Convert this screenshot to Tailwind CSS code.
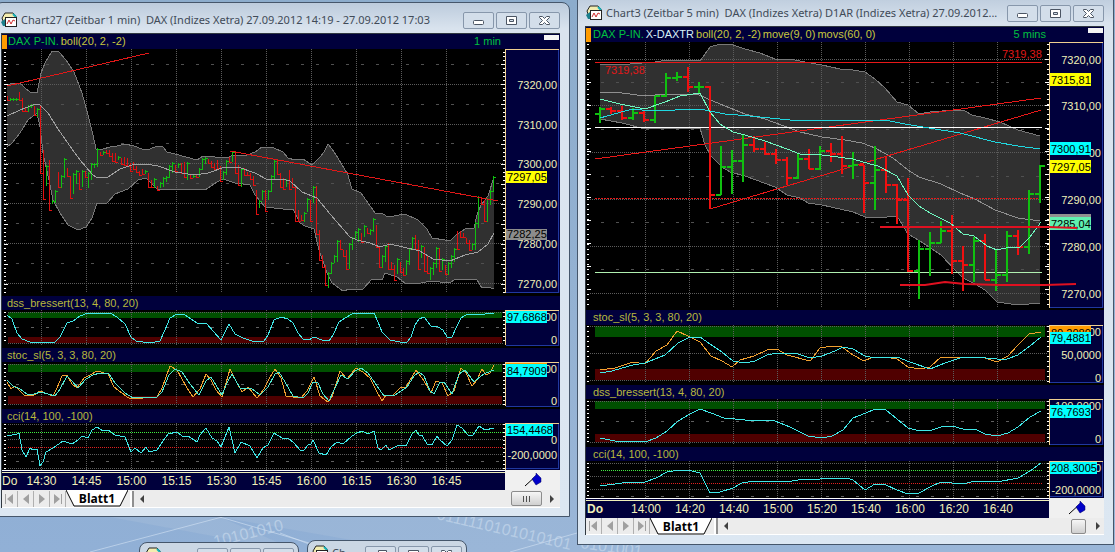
<!DOCTYPE html>
<html lang="de">
<head>
  <meta charset="UTF-8" />
  <meta name="viewport" content="width=device-width, initial-scale=1.0" />
  <title>DAX Charts</title>
  <script src="https://cdn.jsdelivr.net/npm/@tailwindcss/browser@4"></script>
</head>
<body class="relative h-screen overflow-hidden bg-linear-to-b from-[#8caccc] to-[#9ab6d8] font-['Liberation_Sans',sans-serif] text-[11px]">

  <!-- Shared icons -->
  <svg class="hidden">
    <symbol id="app" viewBox="0 0 16 16">
      <path d="M1 6l3-5h8l3 3v8H3z" fill="#f3edb0" stroke="#222" />
      <path d="M0 10l4-3v7H2z" fill="#1b7f8c" />
      <path d="M12 2l3 3" stroke="#18b0b8" stroke-width="2" />
      <rect x="4.500" y="5.500" width="11" height="9" fill="#fff" stroke="#222" />
      <path d="M6 12l2-4 2 4 2-4 2 1" fill="none" stroke="#d03030" />
    </symbol>
    <symbol id="min" viewBox="0 0 29 15"><rect x="9.500" y="7.500" width="10" height="4" rx="1" fill="#fff" stroke="#4b5563" /></symbol>
    <symbol id="max" viewBox="0 0 29 15"><path d="M9.500 3.500h10v8h-10zM12.500 6.500h4v2h-4z" fill="#fff" fill-rule="evenodd" stroke="#4b5563" /></symbol>
    <symbol id="restore" viewBox="0 0 29 15"><path d="M12.500 3.500h8v6h-8zM9.500 6.500h8v6h-8z" fill="#fff" stroke="#4b5563" /></symbol>
    <symbol id="close" viewBox="0 0 29 15"><path d="M9.500 3.500h3l2 2 2-2h3v1l-3 3 3 3v1h-3l-2-2-2 2h-3v-1l3-3-3-3z" fill="#fff" stroke="#4b5563" /></symbol>
    <symbol id="pin" viewBox="0 0 18 14">
      <path d="M1 13L13 2" stroke="#000" />
      <path d="M8 6l4-4V0l5 5v4l-5 3z" fill="#0000c8" stroke="#000060" stroke-width=".5" />
    </symbol>
    <symbol id="first" viewBox="0 0 15 16"><path d="M3 3h1v10H3zM11 3v10L5 8z" fill="#a0a0a0" /></symbol>
    <symbol id="prev" viewBox="0 0 15 16"><path d="M11 3v10L5 8z" fill="#a0a0a0" /></symbol>
    <symbol id="next" viewBox="0 0 15 16"><path d="M5 3v10l6-5z" fill="#a0a0a0" /></symbol>
    <symbol id="last" viewBox="0 0 15 16"><path d="M4 3v10l6-5zM11 3h1v10h-1z" fill="#a0a0a0" /></symbol>
  </svg>

  <!-- Wallpaper -->
  <svg class="absolute bottom-0 left-0 h-[52px] w-full" viewBox="0 500 1115 52" preserveAspectRatio="none">
    <path d="M0 552V517H110L300 552zM220 517L420 552H300z" fill="#7fa3d0" opacity=".3" />
    <path d="M220 517L340 552M90 552L222 517M280 533L330 552M510 552L577 533" stroke="#d4e3f3" opacity=".6" fill="none" />
    <g fill="#d6e4f3" opacity=".5" font-family="Liberation Sans" font-size="16">
      <text x="215" y="547" transform="rotate(-14 215 547)">10101010</text>
      <text x="436" y="519" transform="rotate(13 436 519)">0111110101010101</text>
      <text x="580" y="548" transform="rotate(8 580 548)">0101001</text>
    </g>
  </svg>

  <!-- Window: 1 min -->
  <section class="absolute top-[2px] -left-[6px] flex w-[576px] flex-col rounded-t-lg border border-[#45566b] bg-linear-to-b from-[#bccbdc] via-[#d9e3ee] via-5% to-[#dce7f2] pb-2">
    <header class="flex h-[30px] items-center pt-1 pr-[9px] pl-[6px]">
      <svg class="size-4 shrink-0"><use href="#app" /></svg>
      <h1 class="ml-1 min-w-0 flex-1 truncate font-['Noto_Sans',sans-serif] text-[11px] whitespace-pre text-[#414b58]">Chart27 (Zeitbar 1 min)  DAX (Indizes Xetra) 27.09.2012 14:19 - 27.09.2012 17:03</h1>
      <div class="flex gap-[2px]">
        <button aria-label="Minimieren" class="h-[17px] w-[31px] rounded-xs border border-[#8797ab] bg-[#d3deea]"><svg class="h-[15px] w-[29px]"><use href="#min" /></svg></button>
        <button aria-label="Maximieren" class="h-[17px] w-[31px] rounded-xs border border-[#8797ab] bg-[#d3deea]"><svg class="h-[15px] w-[29px]"><use href="#max" /></svg></button>
        <button aria-label="Schließen" class="h-[17px] w-[31px] rounded-xs border border-[#8797ab] bg-[#d3deea]"><svg class="h-[15px] w-[29px]"><use href="#close" /></svg></button>
      </div>
    </header>
    <div class="mr-[9px] ml-[6px] flex flex-col border-t border-l border-[#303840] bg-black">
      <div class="flex h-[15px] items-center bg-[#00003c] text-[#c8c83c]">
        <span class="h-[14px] w-[5px] bg-[#ff9c00]"></span>
        <span class="ml-px text-[#00c040]">DAX P-IN.</span>
        <span class="ml-[2px] flex-1">boll(20, 2, -2)</span>
        <span class="mr-[43px] text-[#00c040]">1 min</span>
        <span class="mr-px mb-2 h-[5px] w-[15px] bg-[#f4f4f4]"></span>
      </div>
      <svg class="h-[247px] w-full" viewBox="2 49 558 247" shape-rendering="crispEdges" fill="none">
        <path fill="#303030" d="M7 85L13 83 20 83 25 88 30 92 37 93 41 73 45 63 52 51 59 52 66 60 74 72 82 93 88 115 93 135 96 149 103 149 110 147 117 146 125 144 134 146 142 149 150 149 157 146 163 147 167 152 175 154 197 160 203 156 227 158 233 155 247 155 255 152 262 147 274 148 283 152 288 158 295 160 303 159 312 165 320 157 324 152 328 144 332 149 338 158 348 175 352 189 361 193 373 210 375 213 383 214 388 217 405 214 418 220 427 229 432 238 445 240 451 240 457 234 462 231 467 228 474 228 477 215 481 205 488 196 494 177V289L488 287 482 288 477 280 455 279 450 283 430 281 417 284 405 283 397 277 385 273 382 280 372 279 363 289 350 289 343 291 332 283 327 273 319 250 314 229 305 226 300 223 293 209 283 209 265 207 255 195 250 185 235 183 223 179 217 182 205 190 180 189 157 189 146 178 138 180 128 189 115 194 107 203 97 203 92 218 86 227 78 230 68 225 60 213 53 200 49 180 43 153 40 127 37 113 28 120 20 133 12 143 7 147z" />
        <path stroke="#5c5c5c" stroke-dasharray="1 1" d="M41.500 49V293M86.500 49V293M131.500 49V293M176.500 49V293M221.500 49V293M266.500 49V293M311.500 49V293M356.500 49V293M401.500 49V293M446.500 49V293M4 84.500H503M4 124.500H503M4 163.500H503M4 203.500H503M4 243.500H503M4 283.500H503" />
        <path stroke="#505050" stroke-dasharray="3 12" d="M16 64.500H500M16 104.500H500M16 143.500H500M16 183.500H500M16 223.500H500M16 263.500H500" />
        <path stroke="#787878" d="M7 85L13 83 20 83 25 88 30 92 37 93 41 73 45 63 52 51 59 52 66 60 74 72 82 93 88 115 93 135 96 149 103 149 110 147 117 146 125 144 134 146 142 149 150 149 157 146 163 147 167 152 175 154 197 160 203 156 227 158 233 155 247 155 255 152 262 147 274 148 283 152 288 158 295 160 303 159 312 165 320 157 324 152 328 144 332 149 338 158 348 175 352 189 361 193 373 210 375 213 383 214 388 217 405 214 418 220 427 229 432 238 445 240 451 240 457 234 462 231 467 228 474 228 477 215 481 205 488 196 494 177M494 289L488 287 482 288 477 280 455 279 450 283 430 281 417 284 405 283 397 277 385 273 382 280 372 279 363 289 350 289 343 291 332 283 327 273 319 250 314 229 305 226 300 223 293 209 283 209 265 207 255 195 250 185 235 183 223 179 217 182 205 190 180 189 157 189 146 178 138 180 128 189 115 194 107 203 97 203 92 218 86 227 78 230 68 225 60 213 53 200 49 180 43 153 40 127 37 113 28 120 20 133 12 143 7 147" />
        <g id="bars1"></g>
        <path stroke="#a0a0a0" d="M7 116L20 110 33 105 39 104 48 113 58 129 72 149 80 160 92 174 97 178 108 177 120 169 132 165 145 164 158 166 175 172 195 175 208 173 225 167 238 167 255 173 268 180 282 179 290 181 302 192 317 198 330 214 350 237 357 240 370 243 380 247 390 244 403 247 420 251 433 259 450 261 465 255 478 252 488 244 494 233" />
        <path stroke="#e01818" d="M7 86L149 53M230 151L498 201" />
        <path stroke="#fff" stroke-width="2" stroke-dasharray="1 3" d="M5 52V295M504 52V295" />
        <path stroke="#fff" stroke-width="4" stroke-dasharray="1 19" d="M6 64V295M503 64V295" />
        <rect x="506" y="49" width="54" height="244" fill="#00003c" />
        <path stroke="#f0d090" d="M505.500 293V49.500H559" /><path stroke="#2038a0" d="M506 292.500H558.500V50" />
        <rect x="506" y="171" width="41" height="12" fill="#ff0" /><rect x="506" y="229" width="41" height="11" fill="#8c8c8c" />
        <text x="507" y="181" fill="#000">7297,05</text><text x="507" y="238" fill="#000">7282,25</text>
        <g fill="#f0f0b8" text-anchor="end">
          <text x="557" y="89">7320,00</text><text x="557" y="129">7310,00</text><text x="557" y="168">7300,00</text>
          <text x="557" y="208">7290,00</text><text x="557" y="248">7280,00</text><text x="557" y="288">7270,00</text>
        </g>
      </svg>

      <div class="flex h-[14px] items-center bg-[#00003c] pl-[5px] text-[#b8b83c]">dss_bressert(13, 4, 80, 20)</div>
      <svg class="h-[38px] w-full" viewBox="2 310 558 38" shape-rendering="crispEdges" fill="none">
        <path fill="#005000" d="M8 312H502V318H8z" /><path fill="#500000" d="M8 337H502V343H8z" />
        <path stroke="#5c5c5c" stroke-dasharray="1 1" d="M41.500 310V346M86.500 310V346M131.500 310V346M176.500 310V346M221.500 310V346M266.500 310V346M311.500 310V346M356.500 310V346M401.500 310V346M446.500 310V346M8 312.500H503M8 343.500H503" />
        <path stroke="#606060" stroke-dasharray="3 12" d="M16 327.500H500" />
        <path stroke="#40e8e8" d="M7 315L12 319 17 333 22 339 30 342 45 343 55 342 60 337 67 323 73 321 80 316 88 313 110 313 117 317 125 324 131 337 136 341 150 343 160 341 165 330 170 318 177 314 185 315 197 323 207 324 213 331 221 340 229 324 235 334 243 338 255 342 264 341 268 335 274 320 281 317 288 319 293 323 298 333 303 339 309 340 314 337 322 340 329 341 333 335 339 322 345 318 352 314 361 313 374 313 378 322 382 332 390 340 400 342 407 342 411 337 415 325 419 319 424 317 431 326 438 327 443 330 447 337 452 337 456 328 461 318 466 315 475 314 485 314 494 313" />
        <path stroke="#fff" stroke-width="2" stroke-dasharray="1 3" d="M5 312V344M504 312V344" />
        <rect x="506" y="310" width="54" height="36" fill="#00003c" />
        <path stroke="#f0d090" d="M505.500 345V310.500H559" /><path stroke="#2038a0" d="M506 345.500H558.500V311" />
        <text x="557" y="321" fill="#f0f0b8" text-anchor="end">00</text><text x="557" y="344" fill="#f0f0b8" text-anchor="end">0</text>
        <rect x="506" y="311" width="41" height="12" fill="#0ff" /><text x="507" y="321" fill="#000">97,6868</text>
      </svg>

      <div class="flex h-[14px] items-center bg-[#00003c] pl-[5px] text-[#b8b83c]">stoc_sl(5, 3, 3, 80, 20)</div>
      <svg class="h-[47px] w-full" viewBox="2 362 558 47" shape-rendering="crispEdges" fill="none">
        <path fill="#005000" d="M8 364H502V372H8z" /><path fill="#500000" d="M8 396H502V404H8z" />
        <path stroke="#5c5c5c" stroke-dasharray="1 1" d="M41.500 362V407M86.500 362V407M131.500 362V407M176.500 362V407M221.500 362V407M266.500 362V407M311.500 362V407M356.500 362V407M401.500 362V407M446.500 362V407M8 364.500H503M8 404.500H503" />
        <path stroke="#606060" stroke-dasharray="3 12" d="M16 384.500H500" />
        <path stroke="#f0a030" d="M7 382L11 389 15 386 25 396 34 395 40 391 53 396 57 388 62 376 67 375 72 384 77 388 84 378 90 375 97 371 108 374 114 387 122 393 130 399 157 397 162 388 170 366 177 370 187 388 193 397 200 389 206 374 211 380 216 390 222 397 230 369 236 381 242 392 248 387 257 398 264 389 269 379 275 369 281 378 286 396 301 398 307 391 314 377 320 396 328 402 332 397 340 371 347 379 356 368 363 372 370 378 376 390 382 401 386 395 393 395 400 388 406 387 416 370 424 381 431 393 436 381 442 383 448 396 454 391 461 368 466 373 472 386 477 380 482 369 486 375 490 373 494 365" />
        <path stroke="#50e8d0" d="M7 380L13 386 20 389 27 394 34 394 41 392 55 396 60 389 67 376 72 381 78 388 86 379 93 375 100 373 109 374 115 383 125 393 133 398 157 397 162 392 169 375 175 369 182 372 190 384 199 395 206 381 211 377 222 395 227 383 232 374 240 388 251 388 260 395 268 387 275 374 279 372 285 382 293 396 303 398 308 393 313 382 318 383 323 394 329 401 334 390 341 375 348 379 355 371 361 368 368 373 375 383 384 396 395 395 407 387 414 376 419 372 424 376 430 391 434 394 440 382 444 382 452 394 459 374 465 370 474 382 481 376 486 373 494 370" />
        <path stroke="#fff" stroke-width="2" stroke-dasharray="1 3" d="M5 364V406M504 364V406" />
        <rect x="506" y="362" width="54" height="45" fill="#00003c" />
        <path stroke="#f0d090" d="M505.500 406V362.500H559" /><path stroke="#2038a0" d="M506 406.500H558.500V363" />
        <path stroke="#ff9c00" d="M506 363.500H547" />
        <text x="557" y="373" fill="#f0f0b8" text-anchor="end">00</text><text x="557" y="405" fill="#f0f0b8" text-anchor="end">0</text>
        <rect x="506" y="364" width="41" height="13" fill="#0ff" /><text x="507" y="375" fill="#000">84,7909</text>
      </svg>

      <div class="flex h-[14px] items-center bg-[#00003c] pl-[5px] text-[#b8b83c]">cci(14, 100, -100)</div>
      <svg class="h-[47px] w-full" viewBox="2 423 558 47" shape-rendering="crispEdges" fill="none">
        <path stroke="#5c5c5c" stroke-dasharray="1 1" d="M41.500 423V470M86.500 423V470M131.500 423V470M176.500 423V470M221.500 423V470M266.500 423V470M311.500 423V470M356.500 423V470M401.500 423V470M446.500 423V470M8 424.500H503M8 439.500H503M8 454.500H503M8 468.500H503" />
        <path stroke="#606060" stroke-dasharray="3 12" d="M16 461.500H500" />
        <path stroke="#40f040" stroke-dasharray="1 1" d="M8 432.500H503" /><path stroke="#e02020" stroke-dasharray="1 1" d="M8 447.500H503" />
        <path stroke="#40e8e8" d="M7 436L17 434 19 433 22 450 26 457 30 448 33 450 37 449 40 466 43 462 46 452 53 448 63 441 72 444 78 440 82 436 88 438 92 430 97 427 103 431 108 430 115 435 125 437 131 452 135 448 141 453 146 447 149 452 157 450 163 441 168 434 177 432 182 436 188 436 197 442 200 435 206 428 212 438 217 441 221 447 229 427 235 453 241 442 250 446 257 458 263 448 268 445 274 433 282 438 288 438 294 443 300 450 304 450 308 445 311 444 313 440 319 453 326 455 331 447 337 442 343 444 352 436 357 433 362 431 368 434 374 431 378 448 381 450 386 445 389 450 399 445 406 446 412 434 416 430 419 435 422 435 427 444 432 445 437 436 440 440 447 446 452 440 457 425 462 428 468 435 473 435 479 426 485 430 494 428" />
        <path stroke="#fff" stroke-width="2" stroke-dasharray="1 3" d="M5 424V470M504 424V470" />
        <rect x="506" y="423" width="54" height="47" fill="#00003c" />
        <path stroke="#f0d090" d="M505.500 470V423.500H559" /><path stroke="#2038a0" d="M506 468.500H558.500V424" />
        <text x="557" y="444" fill="#f0f0b8" text-anchor="end">0</text><text x="557" y="459" fill="#f0f0b8" text-anchor="end">-200,0000</text>
        <rect x="506" y="424" width="47" height="12" fill="#0ff" /><text x="507" y="434" fill="#000">154,4468</text>
      </svg>

      <div class="flex h-5 bg-[#f0f0f0]">
        <div class="flex flex-1 border-t border-white bg-[#00003c] text-[12px] leading-[17px] text-[#f0f0b8]">
          <div class="mt-px flex flex-1 border-t border-[#f0f0b8]">
            <span class="w-[17px]">Do</span>
            <span class="w-[45px] text-center">14:30</span><span class="w-[45px] text-center">14:45</span>
            <span class="w-[45px] text-center">15:00</span><span class="w-[45px] text-center">15:15</span>
            <span class="w-[45px] text-center">15:30</span><span class="w-[45px] text-center">15:45</span>
            <span class="w-[45px] text-center">16:00</span><span class="w-[45px] text-center">16:15</span>
            <span class="w-[45px] text-center">16:30</span><span class="w-[45px] text-center">16:45</span>
          </div>
        </div>
        <div class="flex w-[55px] items-center justify-center"><svg class="h-[14px] w-[18px]"><use href="#pin" /></svg></div>
      </div>
      <div class="flex h-[18px] items-center border-b border-white bg-[#ececec]">
        <button aria-label="Erstes Blatt" class="h-4 w-4 border-r border-[#b0b0b0]"><svg class="h-4 w-[15px]"><use href="#first" /></svg></button>
        <button aria-label="Voriges Blatt" class="h-4 w-4 border-r border-[#b0b0b0]"><svg class="h-4 w-[15px]"><use href="#prev" /></svg></button>
        <button aria-label="Nächstes Blatt" class="h-4 w-4 border-r border-[#b0b0b0]"><svg class="h-4 w-[15px]"><use href="#next" /></svg></button>
        <button aria-label="Letztes Blatt" class="h-4 w-4 border-r border-[#b0b0b0]"><svg class="h-4 w-[15px]"><use href="#last" /></svg></button>
        <button class="relative h-[17px] w-[62px] font-['Open_Sans',sans-serif] text-[12px] leading-[15px] font-bold text-black">
          <svg class="absolute inset-0 h-[17px] w-[62px]" viewBox="0 0 62 17"><path d="M0 0l8 16h46l8-16" fill="#fff" stroke="#000" /></svg>
          <span class="relative">Blatt1</span>
        </button>
        <span class="ml-[2px] h-4 w-1 border-r-2 border-[#909090] bg-white"></span>
        <svg class="ml-[6px] h-2 w-1" viewBox="0 0 4 8"><path d="M4 0v8L0 4z" fill="#404040" /></svg>
        <span class="flex-1"></span>
        <button aria-label="Bildlauf" class="flex h-[15px] w-[31px] items-center justify-center gap-[2px] rounded-xs border border-[#8c8c8c] bg-linear-to-b from-[#f6f6f6] to-[#d0d0d0]">
          <i class="h-[6px] w-px bg-[#505050]"></i><i class="h-[6px] w-px bg-[#505050]"></i><i class="h-[6px] w-px bg-[#505050]"></i>
        </button>
        <svg class="mr-[6px] ml-2 h-2 w-1" viewBox="0 0 4 8"><path d="M0 0v8l4-4z" fill="#404040" /></svg>
      </div>
    </div>
  </section>

  <!-- Window: 5 min -->
  <section class="absolute -top-[5px] left-[577px] flex w-[537px] flex-col border border-[#45566b] bg-linear-to-b from-[#bccbdc] via-[#d9e3ee] via-5% to-[#dce7f2] pb-[9px]">
    <header class="flex h-[30px] items-center pt-1 pr-[9px] pl-2">
      <svg class="size-4 shrink-0"><use href="#app" /></svg>
      <h1 class="ml-1 min-w-0 flex-1 truncate font-['Noto_Sans',sans-serif] text-[11px] whitespace-pre text-[#414b58]">Chart3 (Zeitbar 5 min)  DAX (Indizes Xetra) D1AR (Indizes Xetra) 27.09.2012...</h1>
      <div class="flex gap-[2px]">
        <button aria-label="Minimieren" class="h-[17px] w-[31px] rounded-xs border border-[#8797ab] bg-[#d3deea]"><svg class="h-[15px] w-[29px]"><use href="#min" /></svg></button>
        <button aria-label="Maximieren" class="h-[17px] w-[31px] rounded-xs border border-[#8797ab] bg-[#d3deea]"><svg class="h-[15px] w-[29px]"><use href="#max" /></svg></button>
        <button aria-label="Schließen" class="h-[17px] w-[31px] rounded-xs border border-[#8797ab] bg-[#d3deea]"><svg class="h-[15px] w-[29px]"><use href="#close" /></svg></button>
      </div>
    </header>
    <div class="mr-[9px] ml-[7px] flex flex-col border-t border-l border-[#303840] bg-black">
      <div class="flex h-[15px] items-center bg-[#00003c] text-[#c8c83c]">
        <span class="h-[14px] w-[5px] bg-[#ff9c00]"></span>
        <span class="ml-[2px] text-[#00c040]">DAX P-IN.</span>
        <span class="ml-[2px] text-[#d8f0f8]">X-DAXTR</span>
        <span class="ml-[2px]">boll(20, 2, -2)</span>
        <span class="ml-[2px]">move(9, 0)</span>
        <span class="ml-[2px] flex-1">movs(60, 0)</span>
        <span class="mr-[42px] text-[#00c040]">5 mins</span>
        <span class="mr-px mb-2 h-[5px] w-[15px] bg-[#f4f4f4]"></span>
      </div>
      <svg class="h-[268px] w-full" viewBox="586 42 518 268" shape-rendering="crispEdges" fill="none">
        <path fill="#303030" d="M600 65L630 64 655 62 668 60 700 61 710 47 720 44 733 45 745 49 760 53 775 59 790 59 805 62 822 65 840 69 853 70 865 72 875 79 885 88 897 102 908 105 919 114 930 112 955 110 965 111 972 115 985 118 1000 122 1018 130 1040 136V303L1018 305 997 302 985 290 975 284 963 278 955 270 941 255 920 241 908 234 897 216 878 218 865 217 853 212 822 205 808 203 800 198 787 195 775 187 745 176 730 172 722 167 711 156 705 145 700 128 660 128 645 129 622 123 600 119z" />
        <path stroke="#5c5c5c" stroke-dasharray="1 1" d="M645.500 42V308M689.500 42V308M733.500 42V308M777.500 42V308M821.500 42V308M865.500 42V308M909.500 42V308M953.500 42V308M997.500 42V308M590 59.500H1047M590 105.500H1047M590 152.500H1047M590 199.500H1047M590 246.500H1047M590 293.500H1047" />
        <path stroke="#505050" stroke-dasharray="3 12" d="M601 82.500H1045M601 129.500H1045M601 176.500H1045M601 222.500H1045M601 269.500H1045" />
        <path stroke="#787878" d="M600 65L630 64 655 62 668 60 700 61 710 47 720 44 733 45 745 49 760 53 775 59 790 59 805 62 822 65 840 69 853 70 865 72 875 79 885 88 897 102 908 105 919 114 930 112 955 110 965 111 972 115 985 118 1000 122 1018 130 1040 136M1040 303L1018 305 997 302 985 290 975 284 963 278 955 270 941 255 920 241 908 234 897 216 878 218 865 217 853 212 822 205 808 203 800 198 787 195 775 187 745 176 730 172 722 167 711 156 705 145 700 128 660 128 645 129 622 123 600 119" />
        <path stroke="#909090" d="M600 92L622 93 645 96 666 94 699 95 720 104 745 114 765 119 800 132 822 137 845 140 862 143 875 148 893 158 908 170 919 177 941 184 960 193 975 199 995 210 1018 218 1040 221" />
        <path stroke="#e81818" d="M595 62.500H1042M595 159L1041 98M710 209L1041 110" />
        <path stroke="#e81818" stroke-dasharray="2 1" d="M595 198.500H1042" />
        <path stroke="#fff" d="M595 127.500H1042" /><path stroke="#b0f0b0" d="M595 272.500H1042" />
        <g id="bars5"></g>
        <path stroke="#20d8e0" d="M600 118L625 111 633 109 650 111 675 110 700 109 725 114 750 116 790 120 822 120 885 120 905 124 935 129 960 133 995 142 1018 146 1040 149" />
        <path stroke="#70f8c0" d="M600 99L620 104 645 109 665 102 680 96 700 93 710 112 720 124 733 132 745 135 765 141 787 149 800 154 822 155 853 159 870 164 878 166 897 176 908 195 919 206 930 213 950 223 963 234 974 236 987 246 997 250 1010 247 1020 247 1030 237 1041 222" />
        <g fill="#e01818"><text x="605" y="74">7319,38</text><text x="1002" y="58">7319,38</text></g>
        <path stroke="#fff" stroke-width="2" stroke-dasharray="1 4" d="M588 44V309M1048 44V309" />
        <path stroke="#fff" stroke-width="4" stroke-dasharray="1 22" d="M589 59V309M1047 59V309" />
        <rect x="1050" y="42" width="54" height="266" fill="#00003c" />
        <path stroke="#f0d090" d="M1049.500 308V42.500H1103" /><path stroke="#2038a0" d="M1050 307.500H1102.500V43" />
        <g fill="#f0f0b8" text-anchor="end">
          <text x="1101" y="64">7320,00</text><text x="1101" y="110">7310,00</text><text x="1101" y="157">00</text>
          <text x="1101" y="204">7290,00</text><text x="1101" y="251">7280,00</text><text x="1101" y="298">7270,00</text>
        </g>
        <path fill="#ff0" d="M1050 73h41v13h-41zM1050 160h41v13h-41z" /><path fill="#0ff" d="M1050 142h41v13h-41z" />
        <path fill="#909090" d="M1050 214h41v3h-41z" /><path fill="#60f0b0" d="M1050 217h41v13h-41z" />
        <g fill="#000"><text x="1051" y="84">7315,81</text><text x="1051" y="153">7300,91</text><text x="1051" y="171">7297,05</text><text x="1051" y="228">7285,04</text></g>
        <g stroke="#e01020" stroke-width="2" shape-rendering="auto"><path d="M880 227H1048L1077 228" /><path d="M900 285L925 285 945 282 965 284 1000 285 1045 285 1076 284" /></g>
      </svg>

      <div class="flex h-[15px] items-center bg-[#00003c] pl-[7px] text-[#b8b83c]">stoc_sl(5, 3, 3, 80, 20)</div>
      <svg class="h-[60px] w-full" viewBox="586 325 518 60" shape-rendering="crispEdges" fill="none">
        <path fill="#005000" d="M595 326H1045V337H595z" /><path fill="#500000" d="M595 369H1045V380H595z" />
        <path stroke="#5c5c5c" stroke-dasharray="1 1" d="M645.500 325V383M689.500 325V383M733.500 325V383M777.500 325V383M821.500 325V383M865.500 325V383M909.500 325V383M953.500 325V383M997.500 325V383M590 326.500H1047M590 353.500H1047M590 380.500H1047" />
        <path stroke="#f0a030" d="M600 370L615 368 633 362 645 364 656 351 667 345 677 331 688 336 700 342 711 356 722 361 732 367 740 360 754 356 767 350 777 349 787 355 810 361 820 348 832 346 842 347 853 355 864 361 873 357 886 357 897 359 908 367 920 369 930 367 941 357 965 357 985 358 997 362 1008 356 1018 345 1029 334 1041 332" />
        <path stroke="#40e8e8" d="M600 373L612 371 622 368 633 365 645 363 665 355 678 343 690 337 700 337 710 344 722 352 733 361 745 363 755 361 767 355 778 353 795 353 810 358 822 356 835 351 843 347 853 349 865 356 875 358 897 357 910 362 930 369 945 363 960 358 975 357 997 359 1007 359 1018 355 1030 346 1041 337" />
        <path stroke="#fff" stroke-width="2" stroke-dasharray="1 4" d="M588 326V383M1048 326V383" />
        <rect x="1050" y="325" width="54" height="58" fill="#00003c" />
        <path stroke="#f0d090" d="M1049.500 383V325.500H1103" /><path stroke="#2038a0" d="M1050 382.500H1102.500V326" />
        <g fill="#f0f0b8" text-anchor="end"><text x="1101" y="336">00</text><text x="1101" y="359">50,0000</text><text x="1101" y="382">0</text></g>
        <rect x="1050" y="326" width="41" height="8" fill="#ff9c00" /><text x="1051" y="337" fill="#000">80,2089</text>
        <rect x="1050" y="332" width="41" height="12" fill="#0ff" /><text x="1051" y="342" fill="#000">79,4881</text>
      </svg>

      <div class="flex h-[14px] items-center bg-[#00003c] pl-[7px] text-[#b8b83c]">dss_bressert(13, 4, 80, 20)</div>
      <svg class="h-[48px] w-full" viewBox="586 399 518 48" shape-rendering="crispEdges" fill="none">
        <path fill="#005000" d="M595 401H1045V409H595z" /><path fill="#500000" d="M595 434H1045V442H595z" />
        <path stroke="#5c5c5c" stroke-dasharray="1 1" d="M645.500 399V445M689.500 399V445M733.500 399V445M777.500 399V445M821.500 399V445M865.500 399V445M909.500 399V445M953.500 399V445M997.500 399V445M590 401.500H1047M590 442.500H1047" />
        <path stroke="#606060" stroke-dasharray="3 12" d="M601 421.500H1045" />
        <path stroke="#40e8e8" d="M600 438L615 441 635 441 645 442 656 438 667 431 678 421 690 414 700 409 711 413 724 418 745 420 775 421 790 427 808 436 822 438 832 436 843 430 853 418 866 413 875 409 886 410 897 419 908 428 920 431 932 430 941 427 952 426 963 429 975 429 985 434 997 436 1008 433 1018 427 1030 417 1041 411" />
        <path stroke="#fff" stroke-width="2" stroke-dasharray="1 3" d="M588 401V444M1048 401V444" />
        <rect x="1050" y="399" width="54" height="46" fill="#00003c" />
        <path stroke="#f0d090" d="M1049.500 445V399.500H1103" /><path stroke="#2038a0" d="M1050 444.500H1102.500V400" />
        <g fill="#f0f0b8" text-anchor="end"><text x="1101" y="410">100,0000</text><text x="1101" y="443">0</text></g>
        <rect x="1050" y="405" width="41" height="13" fill="#0ff" /><text x="1051" y="416" fill="#000">76,7693</text>
      </svg>

      <div class="flex h-[14px] items-center bg-[#00003c] pl-[7px] text-[#b8b83c]">cci(14, 100, -100)</div>
      <svg class="h-[37px] w-full" viewBox="586 461 518 37" shape-rendering="crispEdges" fill="none">
        <path stroke="#5c5c5c" stroke-dasharray="1 1" d="M645.500 461V498M689.500 461V498M733.500 461V498M777.500 461V498M821.500 461V498M865.500 461V498M909.500 461V498M953.500 461V498M997.500 461V498M590 463.500H1047M590 476.500H1047M590 489.500H1047" />
        <path stroke="#606060" stroke-dasharray="3 12" d="M601 496.500H1045" />
        <path stroke="#40f040" stroke-dasharray="1 1" d="M601 470.500H1042" /><path stroke="#e02020" stroke-dasharray="1 1" d="M601 483.500H1042" />
        <path stroke="#40e8e8" d="M600 486L615 484 630 482 645 482 656 478 667 472 680 470 692 471 700 473 710 493 720 492 733 488 742 483 755 481 775 481 787 482 798 480 820 479 835 478 847 478 853 480 865 490 875 484 886 485 897 490 908 494 919 493 930 487 941 482 963 484 975 481 997 482 1018 478 1030 471 1041 463" />
        <path stroke="#fff" stroke-width="2" stroke-dasharray="1 3" d="M588 463V498M1048 463V498" />
        <rect x="1050" y="461" width="54" height="37" fill="#00003c" />
        <path stroke="#f0d090" d="M1049.500 498V461.500H1103" /><path stroke="#2038a0" d="M1050 496.500H1102.500V462" />
        <g fill="#f0f0b8" text-anchor="end"><text x="1101" y="472">0</text><text x="1101" y="494">-200,0000</text></g>
        <rect x="1050" y="462" width="47" height="12" fill="#0ff" /><text x="1051" y="472" fill="#000">208,3005</text>
      </svg>

      <div class="flex h-5 bg-[#f0f0f0]">
        <div class="flex flex-1 border-t border-white bg-[#00003c] text-[12px] leading-[17px] text-[#f0f0b8]">
          <div class="mt-px flex flex-1 border-t border-[#f0f0b8]">
            <span class="w-[38px] pl-px font-bold">Do</span>
            <span class="w-[44px] text-center">14:00</span><span class="w-[44px] text-center">14:20</span>
            <span class="w-[44px] text-center">14:40</span><span class="w-[44px] text-center">15:00</span>
            <span class="w-[44px] text-center">15:20</span><span class="w-[44px] text-center">15:40</span>
            <span class="w-[44px] text-center">16:00</span><span class="w-[44px] text-center">16:20</span>
            <span class="w-[44px] text-center">16:40</span>
          </div>
        </div>
        <div class="flex w-[55px] items-center justify-center"><svg class="h-[14px] w-[18px]"><use href="#pin" /></svg></div>
      </div>
      <div class="flex h-[17px] items-center border-b border-white bg-[#ececec]">
        <button aria-label="Erstes Blatt" class="h-4 w-4 border-r border-[#b0b0b0]"><svg class="h-4 w-[15px]"><use href="#first" /></svg></button>
        <button aria-label="Voriges Blatt" class="h-4 w-4 border-r border-[#b0b0b0]"><svg class="h-4 w-[15px]"><use href="#prev" /></svg></button>
        <button aria-label="Nächstes Blatt" class="h-4 w-4 border-r border-[#b0b0b0]"><svg class="h-4 w-[15px]"><use href="#next" /></svg></button>
        <button aria-label="Letztes Blatt" class="h-4 w-4 border-r border-[#b0b0b0]"><svg class="h-4 w-[15px]"><use href="#last" /></svg></button>
        <button class="relative h-[17px] w-[62px] font-['Open_Sans',sans-serif] text-[12px] leading-[15px] font-bold text-black">
          <svg class="absolute inset-0 h-[17px] w-[62px]" viewBox="0 0 62 17"><path d="M0 0l8 16h46l8-16" fill="#fff" stroke="#000" /></svg>
          <span class="relative">Blatt1</span>
        </button>
        <span class="ml-[2px] h-4 w-1 border-r-2 border-[#909090] bg-white"></span>
        <svg class="ml-[6px] h-2 w-1" viewBox="0 0 4 8"><path d="M4 0v8L0 4z" fill="#404040" /></svg>
        <span class="flex-1"></span>
        <button aria-label="Bildlauf" class="h-[15px] w-[15px] rounded-xs border border-[#8c8c8c] bg-linear-to-b from-[#f6f6f6] to-[#d0d0d0]"></button>
        <svg class="mr-1 ml-[10px] h-2 w-1" viewBox="0 0 4 8"><path d="M0 0v8l4-4z" fill="#404040" /></svg>
      </div>
    </div>
  </section>

  <!-- Minimized windows -->
  <section class="absolute top-[542px] left-[139px] flex h-7 w-[160px] items-start rounded-t-lg border border-[#45566b] bg-[#cbd7e4] pt-1 pr-1 pl-[5px]">
    <svg class="size-4 shrink-0"><use href="#app" /></svg>
    <span class="flex-1"></span>
    <div class="flex gap-[2px] pt-px">
      <button aria-label="Wiederherstellen" class="h-[17px] w-[31px] rounded-xs border border-[#8797ab] bg-[#d3deea]"><svg class="h-[15px] w-[29px]"><use href="#restore" /></svg></button>
      <button aria-label="Maximieren" class="h-[17px] w-[31px] rounded-xs border border-[#8797ab] bg-[#d3deea]"><svg class="h-[15px] w-[29px]"><use href="#max" /></svg></button>
      <button aria-label="Schließen" class="h-[17px] w-[31px] rounded-xs border border-[#8797ab] bg-[#d3deea]"><svg class="h-[15px] w-[29px]"><use href="#close" /></svg></button>
    </div>
  </section>
  <section class="absolute top-[540px] left-[307px] flex h-7 w-[160px] items-start rounded-t-lg border border-[#45566b] bg-[#cbd7e4] pt-1 pr-1 pl-1">
    <svg class="size-4 shrink-0"><use href="#app" /></svg>
    <span class="ml-1 flex-1 font-['Noto_Sans',sans-serif] text-[11px] text-[#414b58]">Ch...</span>
    <div class="flex gap-[2px] pt-px">
      <button aria-label="Wiederherstellen" class="h-[17px] w-[31px] rounded-xs border border-[#8797ab] bg-[#d3deea]"><svg class="h-[15px] w-[29px]"><use href="#restore" /></svg></button>
      <button aria-label="Maximieren" class="h-[17px] w-[31px] rounded-xs border border-[#8797ab] bg-[#d3deea]"><svg class="h-[15px] w-[29px]"><use href="#max" /></svg></button>
      <button aria-label="Schließen" class="h-[17px] w-[31px] rounded-xs border border-[#8797ab] bg-[#d3deea]"><svg class="h-[15px] w-[29px]"><use href="#close" /></svg></button>
    </div>
  </section>

  <script>
    // Each bar is "<g|r><high>-<low>", one bar every 3px
    const bars1 = `r96-101 g98-101 g98-101 g98-101 r92-101 r98-112 r107-112 g105-112 g104-108 r106-116 g108-117 r106-174
      r150-200 g165-186 r160-211 g200-204 g190-203 r172-188 g175-188 g158-178 r168-177 r176-199 g173-194 g170-184 r173-190
      g170-187 r171-178 g172-188 g163-180 g163-168 g148-167 r152-156 g151-155 r150-154 r150-157 r153-162 r153-163 g156-160
      r158-165 r157-166 r158-167 r163-172 r162-170 r166-173 r171-176 r169-175 g170-174 r173-188 r180-188 g178-188 r186-191
      g182-188 g177-187 g176-182 g165-178 g162-173 r165-172 g163-168 r163-174 r162-178 g162-180 r175-179 g175-178 r175-178
      g168-177 g158-170 g157-164 r159-164 r161-168 r163-170 r160-169 r166-182 g171-180 g160-175 r157-163 g151-162 r151-174
      r165-186 g168-187 r168-176 r172-176 r173-180 r176-186 r190-215 g200-208 g190-200 r190-212 g190-200 g175-192 g160-180
      r160-175 r173-188 r178-190 g179-187 r170-190 r178-188 r185-222 r210-222 r215-221 g212-222 g198-212 r200-222 g186-203
      r186-235 r230-261 r255-268 r265-286 g272-288 g262-274 g255-263 g240-262 r240-250 r250-257 r250-270 g243-269 g237-250
      g231-240 g228-242 r233-243 g225-237 r228-234 g229-235 g218-232 r225-248 r247-268 g255-268 g245-262 r243-270 r262-270
      r265-281 g258-274 r262-273 r268-276 g260-275 g248-265 g237-250 r235-250 r240-270 g245-258 r247-272 r255-274 g267-280
      g262-275 g247-268 r248-272 g258-270 r265-275 g262-275 g255-268 g248-262 r231-250 r231-238 r233-238 r238-244 r240-251
      g243-250 g222-250 g196-228 r198-205 r200-222 g198-222 g190-205 g176-192`.split(/\s+/);

    // [high, low, close], one bar every 11px
    const bars5 = [
      [107, 123, 109], [107, 114, 111], [106, 120, 118], [108, 120, 113], [110, 122, 120], [96, 123, 96], [73, 97, 78],
      [72, 81, 77], [67, 92, 87], [82, 94, 87], [86, 209, 195], [146, 195, 167], [150, 194, 161], [135, 182, 145],
      [136, 152, 149], [142, 155, 154], [149, 164, 160], [157, 185, 178], [153, 179, 159], [149, 169, 169], [146, 170, 151],
      [143, 162, 154], [136, 174, 166], [152, 179, 165], [165, 213, 183], [146, 210, 170], [157, 193, 185], [184, 224, 200],
      [178, 272, 271], [240, 299, 249], [232, 276, 243], [221, 243, 231], [215, 274, 261], [246, 291, 265], [237, 282, 241],
      [234, 280, 280], [250, 291, 275], [231, 282, 236], [230, 255, 247], [190, 254, 194], [165, 203, 166]
    ];

    let up = '', down = '';
    bars1.forEach((b, i) => {
      const x = 7.5 + i * 3;
      const [h, l] = b.slice(1).split('-').map(Number);
      const g = b[0] === 'g';
      const d = `M${x} ${h}V${l}M${x} ${(g ? h + 1 : l - 1) + 0.5}h2`;
      if (g) up += d; else down += d;
    });
    document.getElementById('bars1').innerHTML =
      `<path d="${down}" stroke="#e01010"/><path d="${up}" stroke="#10c010"/>`;

    up = down = '';
    let prev = 114;
    bars5.forEach(([h, l, c], i) => {
      const x = 600 + i * 11;
      const d = `M${x} ${h}V${l}M${x - 5} ${prev}h5M${x} ${c}h5`;
      if (c <= prev) up += d; else down += d;
      prev = c;
    });
    document.getElementById('bars5').innerHTML =
      `<path d="${down}" stroke="#f01010" stroke-width="2"/><path d="${up}" stroke="#10c010" stroke-width="2"/>`;
  </script>
</body>
</html>
